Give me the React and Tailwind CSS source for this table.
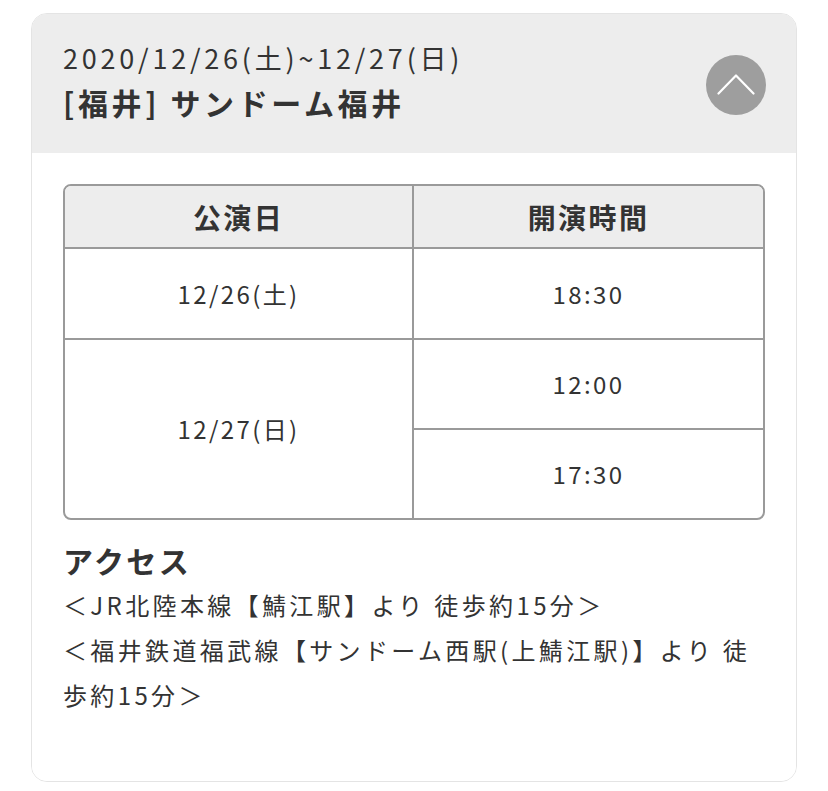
const font = { fontFamily: '"Noto Sans CJK JP", "Noto Sans", sans-serif' };

const ChevronUp = () => (
  <svg width="38" height="22" viewBox="0 0 38 22" fill="none">
    <path d="M1.5 20.5 L19 2.5 L36.5 20.5" stroke="#fff" strokeWidth="2.2" strokeLinecap="round" strokeLinejoin="round" />
  </svg>
);

export default function App() {
  return (
    <div className="min-h-[791px] bg-white pt-[13px] pl-[31px] pr-[31px] text-[#333] tracking-[0.15em]" style={font}>
      <div className="w-[766px] rounded-[16px] border border-[#e4e4e4] overflow-hidden">
        {/* Header */}
        <div className="h-[139px] bg-[#ededed] flex items-start justify-between pl-[31px] pr-[30px] pt-[25px]">
          <div>
            <div className="text-[27px] leading-[38px] tracking-[0.14em] text-[#333]">2020/12/26(土)~12/27(日)</div>
            <div className="text-[30px] leading-[42px] font-bold tracking-[0.12em] text-[#333] mt-[4px]">[福井] サンドーム福井</div>
          </div>
          <button className="w-[60px] h-[60px] mt-[16px] rounded-full bg-[#9e9e9e] flex items-center justify-center pb-[3px]">
            <ChevronUp />
          </button>
        </div>

        {/* Body */}
        <div className="bg-white px-[31px] pt-[31px] pb-[64px]">
          <div className="border-2 border-[#9a9a9a] rounded-[8px] overflow-hidden">
            <div className="grid grid-cols-2 h-[63px] bg-[#ededed] border-b-2 border-[#9a9a9a]">
              <div className="flex items-center justify-center border-r-2 border-[#9a9a9a] text-[28px] font-bold">公演日</div>
              <div className="flex items-center justify-center text-[28px] font-bold">開演時間</div>
            </div>
            <div className="grid grid-cols-2 h-[91px] border-b-2 border-[#9a9a9a]">
              <div className="flex items-center justify-center border-r-2 border-[#9a9a9a] text-[24px]">12/26(土)</div>
              <div className="flex items-center justify-center text-[24px]">18:30</div>
            </div>
            <div className="grid grid-cols-2 h-[178px]">
              <div className="flex items-center justify-center border-r-2 border-[#9a9a9a] text-[24px]">12/27(日)</div>
              <div className="flex flex-col">
                <div className="flex-1 flex items-center justify-center border-b-2 border-[#9a9a9a] text-[24px]">12:00</div>
                <div className="flex-1 flex items-center justify-center text-[24px]">17:30</div>
              </div>
            </div>
          </div>

          <div className="mt-[20px]">
            <div className="text-[30px] font-bold leading-[40px]">アクセス</div>
            <div className="text-[24px] leading-[45px] tracking-[0.14em] mt-[2px]">
              <p>＜JR北陸本線【鯖江駅】より 徒歩約15分＞</p>
              <p>
                ＜福井鉄道福武線【サンドーム西駅(上鯖江駅)】より 徒<br />歩約15分＞
              </p>
            </div>
          </div>
        </div>
      </div>
    </div>
  );
}
